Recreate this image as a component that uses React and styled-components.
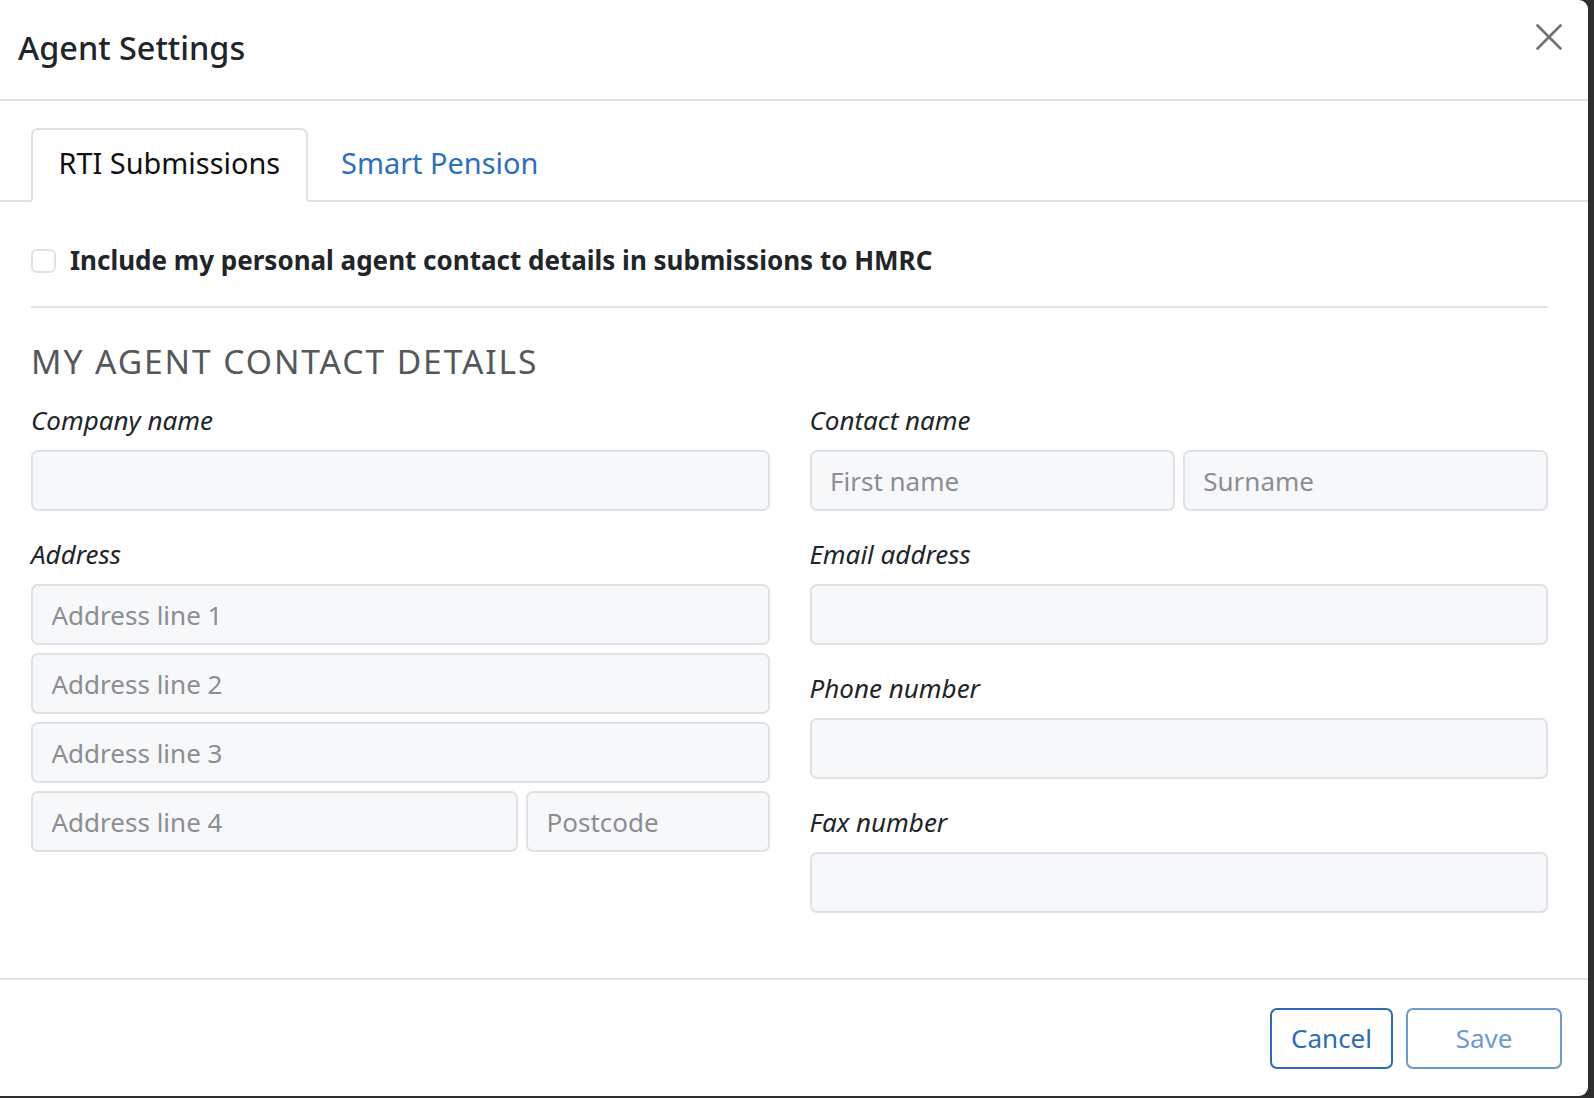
import React from "react"
import styled, { createGlobalStyle } from "styled-components"

const GlobalStyle = createGlobalStyle`
  html, body {
    margin: 0;
    padding: 0;
    background: #2d2d2d;
  }
  body {
    font-family: "Noto Sans", "Open Sans", sans-serif;
    color: #212529;
  }
  * {
    box-sizing: border-box;
  }
`

const Modal = styled.div`
  width: 1588px;
  height: 1096px;
  background: #fff;
  border-radius: 0 9px 9px 0;
  display: flex;
  flex-direction: column;
  overflow: hidden;
`

const Header = styled.div`
  height: 101px;
  flex: none;
  display: flex;
  justify-content: space-between;
  align-items: flex-start;
  padding: 0 26px 0 18px;
  border-bottom: 2px solid #dee2e6;
`

const Title = styled.h5`
  margin: 27.5px 0 0;
  font-size: 32.4px;
  font-weight: 500;
  line-height: 1.2;
  color: #212529;
`

const CloseButton = styled.button`
  margin-top: 24px;
  width: 26px;
  height: 26px;
  padding: 0;
  border: 0;
  background: none;
  cursor: pointer;
  display: flex;

  svg {
    display: block;
  }
`

const Tabs = styled.div`
  flex: none;
  display: flex;
  gap: 6px;
  padding: 26.5px 0 0 31px;
  border-bottom: 2px solid #dee2e6;
`

const Tab = styled.button`
  margin-bottom: -2px;
  padding: 11px 25.5px 16.5px;
  border: 2px solid ${(p) => (p.$active ? "#dee2e6" : "transparent")};
  border-bottom-color: ${(p) => (p.$active ? "#fff" : "transparent")};
  border-radius: 7px 7px 0 0;
  background: ${(p) => (p.$active ? "#fff" : "transparent")};
  font-family: inherit;
  font-size: 28.9px;
  line-height: 1.5;
  color: ${(p) => (p.$active ? "#111" : "#2c6fbb")};
  cursor: pointer;
`

const Body = styled.div`
  flex: 1;
  padding: 39px 40px 0 31px;
`

const CheckRow = styled.label`
  display: flex;
  align-items: center;
  gap: 14px;
  font-size: 26px;
  font-weight: 700;
  line-height: 1.5;
  color: #212529;
`

const CheckBox = styled.span`
  width: 25px;
  height: 24.5px;
  flex: none;
  border: 2px solid #dee1e6;
  border-radius: 6px;
  background: #fff;
`

const Divider = styled.hr`
  margin: 25.5px 0 0;
  border: 0;
  border-top: 2px solid #e3e3e3;
`

const SectionTitle = styled.h3`
  margin: 32.8px 0 0;
  font-size: 33.6px;
  font-weight: 400;
  line-height: 1.2;
  letter-spacing: 1.92px;
  text-transform: uppercase;
  color: #53585d;
`

const FormGrid = styled.div`
  margin-top: 20.5px;
  display: grid;
  grid-template-columns: 1fr 1fr;
  column-gap: 40px;
  align-items: start;
`

const Column = styled.div`
  display: flex;
  flex-direction: column;
  gap: 24px;
`

const Group = styled.div`
  display: flex;
  flex-direction: column;
  gap: 10px;
`

const Label = styled.label`
  font-size: 26px;
  font-style: italic;
  line-height: 39px;
  color: #212529;
`

const Stack = styled.div`
  display: flex;
  flex-direction: column;
  gap: 8px;
`

const Split = styled.div`
  display: grid;
  grid-template-columns: ${(p) => p.$cols || "1fr 1fr"};
  gap: 8px;
`

const Input = styled.input`
  width: 100%;
  height: 61px;
  padding: 0 18.5px;
  border: 2px solid #dee1e5;
  border-radius: 7px;
  background: #f7f8fa;
  font-family: inherit;
  font-size: 26px;
  color: #212529;
  outline: none;

  &::placeholder {
    color: #8b8e92;
  }
`

const Footer = styled.div`
  flex: none;
  height: 118px;
  display: flex;
  justify-content: flex-end;
  align-items: flex-start;
  gap: 13px;
  padding: 27.7px 26px 0 0;
  border-top: 2px solid #dee2e6;
`

const Button = styled.button`
  height: 61.5px;
  min-width: ${(p) => p.$minWidth || "auto"};
  padding: 0 19px;
  border: 2px solid #2c6bb7;
  border-radius: 7px;
  background: #fff;
  font-family: inherit;
  font-size: 26px;
  color: #2c6bb7;
  cursor: pointer;

  &:disabled {
    opacity: 0.68;
    cursor: default;
  }
`

const Field = ({ label, children }) => (
  <Group>
    <Label>{label}</Label>
    {children}
  </Group>
)

const App = () => {
  const [tab, setTab] = React.useState("rti")

  return (
    <>
      <GlobalStyle />
      <Modal>
        <Header>
          <Title>Agent Settings</Title>
          <CloseButton aria-label="Close">
            <svg width="26" height="26" viewBox="0 0 26 26">
              <path
                d="M1.5 1.5 L24.5 24.5 M24.5 1.5 L1.5 24.5"
                stroke="#727272"
                strokeWidth="2.6"
                strokeLinecap="round"
              />
            </svg>
          </CloseButton>
        </Header>

        <Tabs>
          <Tab $active={tab === "rti"} onClick={() => setTab("rti")}>
            RTI Submissions
          </Tab>
          <Tab $active={tab === "pension"} onClick={() => setTab("pension")}>
            Smart Pension
          </Tab>
        </Tabs>

        <Body>
          <CheckRow>
            <CheckBox />
            Include my personal agent contact details in submissions to HMRC
          </CheckRow>
          <Divider />
          <SectionTitle>My agent contact details</SectionTitle>

          <FormGrid>
            <Column>
              <Field label="Company name">
                <Input />
              </Field>
              <Field label="Address">
                <Stack>
                  <Input placeholder="Address line 1" />
                  <Input placeholder="Address line 2" />
                  <Input placeholder="Address line 3" />
                  <Split $cols="2fr 1fr">
                    <Input placeholder="Address line 4" />
                    <Input placeholder="Postcode" />
                  </Split>
                </Stack>
              </Field>
            </Column>

            <Column>
              <Field label="Contact name">
                <Split>
                  <Input placeholder="First name" />
                  <Input placeholder="Surname" />
                </Split>
              </Field>
              <Field label="Email address">
                <Input />
              </Field>
              <Field label="Phone number">
                <Input />
              </Field>
              <Field label="Fax number">
                <Input />
              </Field>
            </Column>
          </FormGrid>
        </Body>

        <Footer>
          <Button>Cancel</Button>
          <Button $minWidth="156px" disabled>
            Save
          </Button>
        </Footer>
      </Modal>
    </>
  )
}

export default App
